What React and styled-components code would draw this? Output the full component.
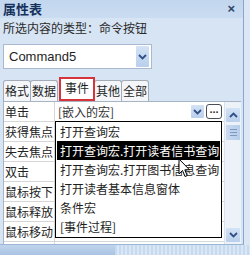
import React from 'react';
import styled, { createGlobalStyle } from 'styled-components';

const GlobalStyle = createGlobalStyle`
  html, body { margin: 0; padding: 0; }
  body {
    width: 250px;
    height: 255px;
    overflow: hidden;
    background: #dbe7f5;
    font-family: "Noto Sans CJK SC", "Liberation Sans", sans-serif;
    color: #1e1e1e;
  }
`;

const Window = styled.div`
  width: 250px;
  height: 255px;
  display: flex;
  flex-direction: column;
  overflow: hidden;
`;

const Panel = styled.div`
  width: 244px;
  height: 245px;
  box-sizing: border-box;
  border-right: 1px solid #8aa6cb;
  border-bottom: 1px solid #9db6d6;
  background: #d6e4f4;
  display: flex;
  flex-direction: column;
  overflow: hidden;
`;

const TitleBar = styled.div`
  height: 18px;
  flex: none;
  display: flex;
  align-items: center;
  justify-content: space-between;
  padding: 0 8px 0 3px;
  background: linear-gradient(#c2d6ee, #cadcf1);
  font-size: 13px;
  font-weight: bold;
  color: #15325c;
  line-height: 18px;
`;

const Close = styled.span`
  font-family: "Liberation Sans", sans-serif;
  font-size: 13px;
  font-weight: bold;
  color: #2d4468;
`;

const TypeLabel = styled.div`
  flex: none;
  padding: 2px 0 0 3px;
  height: 16px;
  font-size: 12px;
  line-height: 16px;
  color: #2a2a2a;
  white-space: nowrap;
`;

const Combo = styled.div`
  flex: none;
  margin: 8px 0 0 3px;
  width: 149px;
  height: 25px;
  box-sizing: border-box;
  border: 1px solid #a9b9cf;
  background: #fff;
  display: flex;
  align-items: center;
  justify-content: space-between;
  padding: 0 2px 0 5px;
  font-family: "Liberation Sans", sans-serif;
  font-size: 13px;
`;

const DropButton = styled.div`
  width: ${p => p.$w || 13}px;
  height: ${p => p.$h || 13}px;
  flex: none;
  display: flex;
  align-items: center;
  justify-content: center;
  background: linear-gradient(#d4e3f5, #b9cfec);
  border-radius: 1px;
`;

const TabRow = styled.div`
  flex: none;
  margin-top: 8px;
  height: 24px;
  padding-left: 3px;
  display: flex;
  align-items: flex-end;
`;

const Tab = styled.div`
  height: ${p => (p.$active ? 24 : 21)}px;
  box-sizing: border-box;
  padding: 0 ${p => (p.$active ? 4 : 1)}px;
  margin: 0 -1px 0 ${p => (p.$active ? 2 : 0)}px;
  border: ${p => (p.$active ? '2px solid #d5343a' : '1px solid #a3abb6')};
  border-bottom: ${p => (p.$active ? '2px solid #d5343a' : 'none')};
  border-radius: ${p => (p.$active ? '0' : '3px 3px 0 0')};
  background: ${p => (p.$active ? '#fff' : '#f4f6f9')};
  font-size: 12px;
  line-height: ${p => (p.$active ? 18 : 20)}px;
  position: relative;
  z-index: ${p => (p.$active ? 2 : 1)};
`;

const Grid = styled.div`
  position: relative;
  flex: 1;
  margin-left: 3px;
  width: 238px;
  box-sizing: border-box;
  border-top: 1px solid #a7b4c4;
  border-left: 1px solid #a7b4c4;
  background: #fff;
  display: flex;
  overflow: hidden;
`;

const Table = styled.div`
  flex: 1;
  display: flex;
  flex-direction: column;
`;

const Row = styled.div`
  flex: none;
  height: 20px;
  box-sizing: border-box;
  border-bottom: 1px solid #d6d6d6;
  display: grid;
  grid-template-columns: 51px 1fr;
`;

const Label = styled.div`
  border-right: 1px solid #d6d6d6;
  padding-left: 1px;
  font-size: 12px;
  line-height: 19px;
  white-space: nowrap;
  overflow: hidden;
  color: #222;
`;

const Value = styled.div`
  display: flex;
  align-items: center;
  gap: 2px;
  padding: 0 2px 0 3px;
  font-size: 12px;
  line-height: 19px;
  color: #333;
  white-space: nowrap;
`;

const Spacer = styled.div`
  flex: 1;
`;

const Ellipsis = styled.div`
  width: 16px;
  height: 15px;
  box-sizing: border-box;
  border: 1px solid #4a4f57;
  border-radius: 3px;
  background: #fff;
  font-family: "Liberation Sans", sans-serif;
  font-size: 11px;
  font-weight: bold;
  line-height: 9px;
  text-align: center;
`;

const Scrollbar = styled.div`
  flex: none;
  width: 17px;
  box-sizing: border-box;
  padding: 6px 1px 2px 1px;
  background: #edf2f9;
  border-left: 1px solid #d9e2ee;
  display: flex;
  flex-direction: column;
  align-items: center;
`;

const Thumb = styled.div`
  margin-top: 3px;
  width: 14px;
  height: 15px;
  background: linear-gradient(90deg, #c9daf0, #b7cdea);
  display: flex;
  flex-direction: column;
  align-items: center;
  justify-content: center;
  gap: 2px;
`;

const Grip = styled.div`
  width: 7px;
  height: 1px;
  background: #7d97bd;
`;

const Dropdown = styled.div`
  position: absolute;
  left: 51px;
  top: 19px;
  width: 167px;
  height: 117px;
  box-sizing: border-box;
  border: 1px solid #000;
  background: #fff;
  padding: 0 1px;
  z-index: 5;
`;

const Item = styled.div`
  height: 19px;
  padding-left: 3px;
  font-size: 12px;
  line-height: 19px;
  white-space: nowrap;
  overflow: hidden;
  background: ${p => (p.$selected ? '#000' : 'transparent')};
  color: ${p => (p.$selected ? '#fff' : '#1e1e1e')};
`;

const Cursor = styled.svg`
  position: absolute;
  left: 174px;
  top: 56px;
  z-index: 6;
`;

const StatusBar = styled.div`
  flex: none;
  height: 10px;
  display: flex;
`;

const StatusLeft = styled.div`
  width: 115px;
  background: linear-gradient(#c0d4ec, #aac3e3);
`;

const StatusRight = styled.div`
  flex: 1;
  background: repeating-linear-gradient(90deg, #c6d9ef 0 2px, #d8e6f5 2px 4px);
`;

const Chevron = ({ up }) => (
  <svg width="9" height="6" viewBox="0 0 9 6">
    <polyline
      points={up ? '1,5 4.5,1.5 8,5' : '1,1 4.5,4.5 8,1'}
      fill="none"
      stroke="#2f4f86"
      strokeWidth="1.8"
    />
  </svg>
);

// last row is only partly visible at the bottom edge
const labels = ['单击', '获得焦点', '失去焦点', '双击', '鼠标按下', '鼠标释放', '鼠标移动', ''];

const options = [
  '打开查询宏',
  '打开查询宏.打开读者信书查询',
  '打开查询宏.打开图书信息查询',
  '打开读者基本信息窗体',
  '条件宏',
  '[事件过程]',
];

export default function App() {
  return (
    <>
      <GlobalStyle />
      <Window>
        <Panel>
          <TitleBar>
            <span>属性表</span>
            <Close>×</Close>
          </TitleBar>
          <TypeLabel>所选内容的类型：命令按钮</TypeLabel>
          <Combo>
            <span>Command5</span>
            <DropButton $w={13} $h={21}>
              <Chevron />
            </DropButton>
          </Combo>
          <TabRow>
            <Tab>格式</Tab>
            <Tab>数据</Tab>
            <Tab $active>事件</Tab>
            <Tab>其他</Tab>
            <Tab>全部</Tab>
          </TabRow>
          <Grid>
            <Table>
              {labels.map((l, i) => (
                <Row key={i}>
                  <Label>{l}</Label>
                  {i === 0 ? (
                    <Value>
                      <span>[嵌入的宏]</span>
                      <Spacer />
                      <DropButton>
                        <Chevron />
                      </DropButton>
                      <Ellipsis>...</Ellipsis>
                    </Value>
                  ) : (
                    <Value />
                  )}
                </Row>
              ))}
            </Table>
            <Scrollbar>
              <DropButton $w={14} $h={14}>
                <Chevron up />
              </DropButton>
              <Thumb>
                <Grip />
                <Grip />
                <Grip />
              </Thumb>
              <Spacer />
              <DropButton $w={14} $h={14}>
                <Chevron />
              </DropButton>
            </Scrollbar>
            <Dropdown>
              {options.map((o, i) => (
                <Item key={o} $selected={i === 1}>{o}</Item>
              ))}
            </Dropdown>
            <Cursor width="13" height="20" viewBox="0 0 13 20">
              <path
                d="M1,1 L1,16 L4.5,12.5 L7,18.5 L9.2,17.6 L6.8,11.8 L11.5,11.8 Z"
                fill="#fff"
                stroke="#000"
                strokeWidth="1"
                strokeLinejoin="round"
              />
            </Cursor>
          </Grid>
        </Panel>
        <StatusBar>
          <StatusLeft />
          <StatusRight />
        </StatusBar>
      </Window>
    </>
  );
}
